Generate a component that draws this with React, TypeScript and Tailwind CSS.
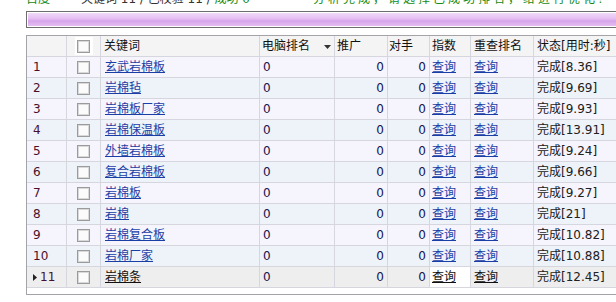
import * as React from "react"

const rows: [string, string][] = [
  ["玄武岩棉板", "8.36"],
  ["岩棉毡", "9.69"],
  ["岩棉板厂家", "9.93"],
  ["岩棉保温板", "13.91"],
  ["外墙岩棉板", "9.24"],
  ["复合岩棉板", "9.66"],
  ["岩棉板", "9.27"],
  ["岩棉", "21"],
  ["岩棉复合板", "10.82"],
  ["岩棉厂家", "10.88"],
  ["岩棉条", "12.45"],
]

const cell = "h-full shrink-0 border-r border-b border-[#d6d6de] flex items-center overflow-hidden whitespace-nowrap"

function Checkbox() {
  return (
    <div className="w-[13px] h-[13px] border border-[#9b9b9b] bg-[#fbfbfb] shadow-[inset_0_0_0_1px_#d9d9d9]" />
  )
}

function Row({ i, kw, time }: { i: number; kw: string; time: string }) {
  const current = i === 11
  const bg = current ? "bg-[#eeeeee]" : i % 2 === 1 ? "bg-[#f6f4fc]" : "bg-[#eef2f9]"
  const link = current ? "underline text-[#111111]" : "underline text-[#1b3ea6]"
  return (
    <div className={`flex h-[21px] ${bg}`}>
      <div className={`${cell} w-[40px] pl-[6px] text-[#4a0f2a]`}>
        {current && (
          <svg width="4" height="7" viewBox="0 0 4 7" className="mr-[3px]">
            <polygon points="0,0 4,3.5 0,7" fill="#222" />
          </svg>
        )}
        {i}
      </div>
      <div className={`${cell} w-[34px] justify-center`}>
        <Checkbox />
      </div>
      <div className={`${cell} w-[159px] pl-[4px]`}>
        <span className={link}>{kw}</span>
      </div>
      <div className={`${cell} w-[75px] pl-[3px] text-[#16134e]`}>0</div>
      <div className={`${cell} w-[53px] justify-end pr-[3px] text-[#16134e]`}>0</div>
      <div className={`${cell} w-[42px] justify-end pr-[3px] text-[#16134e]`}>0</div>
      <div className={`${cell} w-[41px] pl-[2px] ${current ? "bg-white" : ""}`}>
        <span className={link}>查询</span>
      </div>
      <div className={`${cell} w-[63px] pl-[3px]`}>
        <span className={link}>查询</span>
      </div>
      <div className={`${cell} w-[110px] pl-[3px] text-[#202020]`}>完成[{time}]</div>
    </div>
  )
}

export default function App() {
  return (
    <div className="w-[616px] h-[302px] overflow-hidden bg-white text-[12px] font-['DejaVu_Sans','Noto_Sans_CJK_SC',sans-serif]">
      {/* status line, mostly scrolled out of view */}
      <div className="h-[11px] overflow-hidden">
        <div className="flex -mt-[9px] pl-[26px] leading-[16px] whitespace-nowrap">
          <span className="w-[55px] shrink-0 text-[#148a14]">百度</span>
          <span className="w-[232px] shrink-0 text-[#333333]">
            关键词 11 / 已校验 11 / <span className="text-[#148a14]">成功 0</span>
          </span>
          <span className="text-[#148a14] tracking-[3px]">分析完成，请选择已成功排名，给进行优化!</span>
        </div>
      </div>

      {/* progress bar */}
      <div className="ml-[26px] w-[600px] h-[17px] border border-[#6d6d6d] p-px bg-white">
        <div className="h-full bg-[linear-gradient(to_bottom,#f0d9f8_0%,#e6c2f3_40%,#d6a3ea_62%,#e4bef2_100%)]" />
      </div>

      {/* grid */}
      <div className="mt-[7px] ml-[26px] w-[620px] h-[260px] border border-[#a3a3a8] bg-white">
        <div className="flex h-[21px] bg-[#f4f4f4] text-[#111111]">
          <div className={`${cell} w-[40px]`} />
          <div className={`${cell} w-[34px] justify-center`}>
            <div className="w-[18px] h-[18px] bg-white flex items-center justify-center">
              <Checkbox />
            </div>
          </div>
          <div className={`${cell} w-[159px] pl-[3px]`}>关键词</div>
          <div className={`${cell} w-[75px] pl-[2px]`}>
            <span>电脑排名</span>
            <svg width="7" height="4" viewBox="0 0 7 4" className="ml-[14px] mt-[1px]">
              <polygon points="0,0 7,0 3.5,4" fill="#333" />
            </svg>
          </div>
          <div className={`${cell} w-[53px] pl-[2px]`}>推广</div>
          <div className={`${cell} w-[42px] pl-[1px]`}>对手</div>
          <div className={`${cell} w-[41px] pl-[2px]`}>指数</div>
          <div className={`${cell} w-[63px] pl-[3px]`}>重查排名</div>
          <div className={`${cell} w-[110px] pl-[3px]`}>状态[用时:秒]</div>
        </div>
        {rows.map(([kw, t], idx) => (
          <Row key={idx} i={idx + 1} kw={kw} time={t} />
        ))}
      </div>
    </div>
  )
}
